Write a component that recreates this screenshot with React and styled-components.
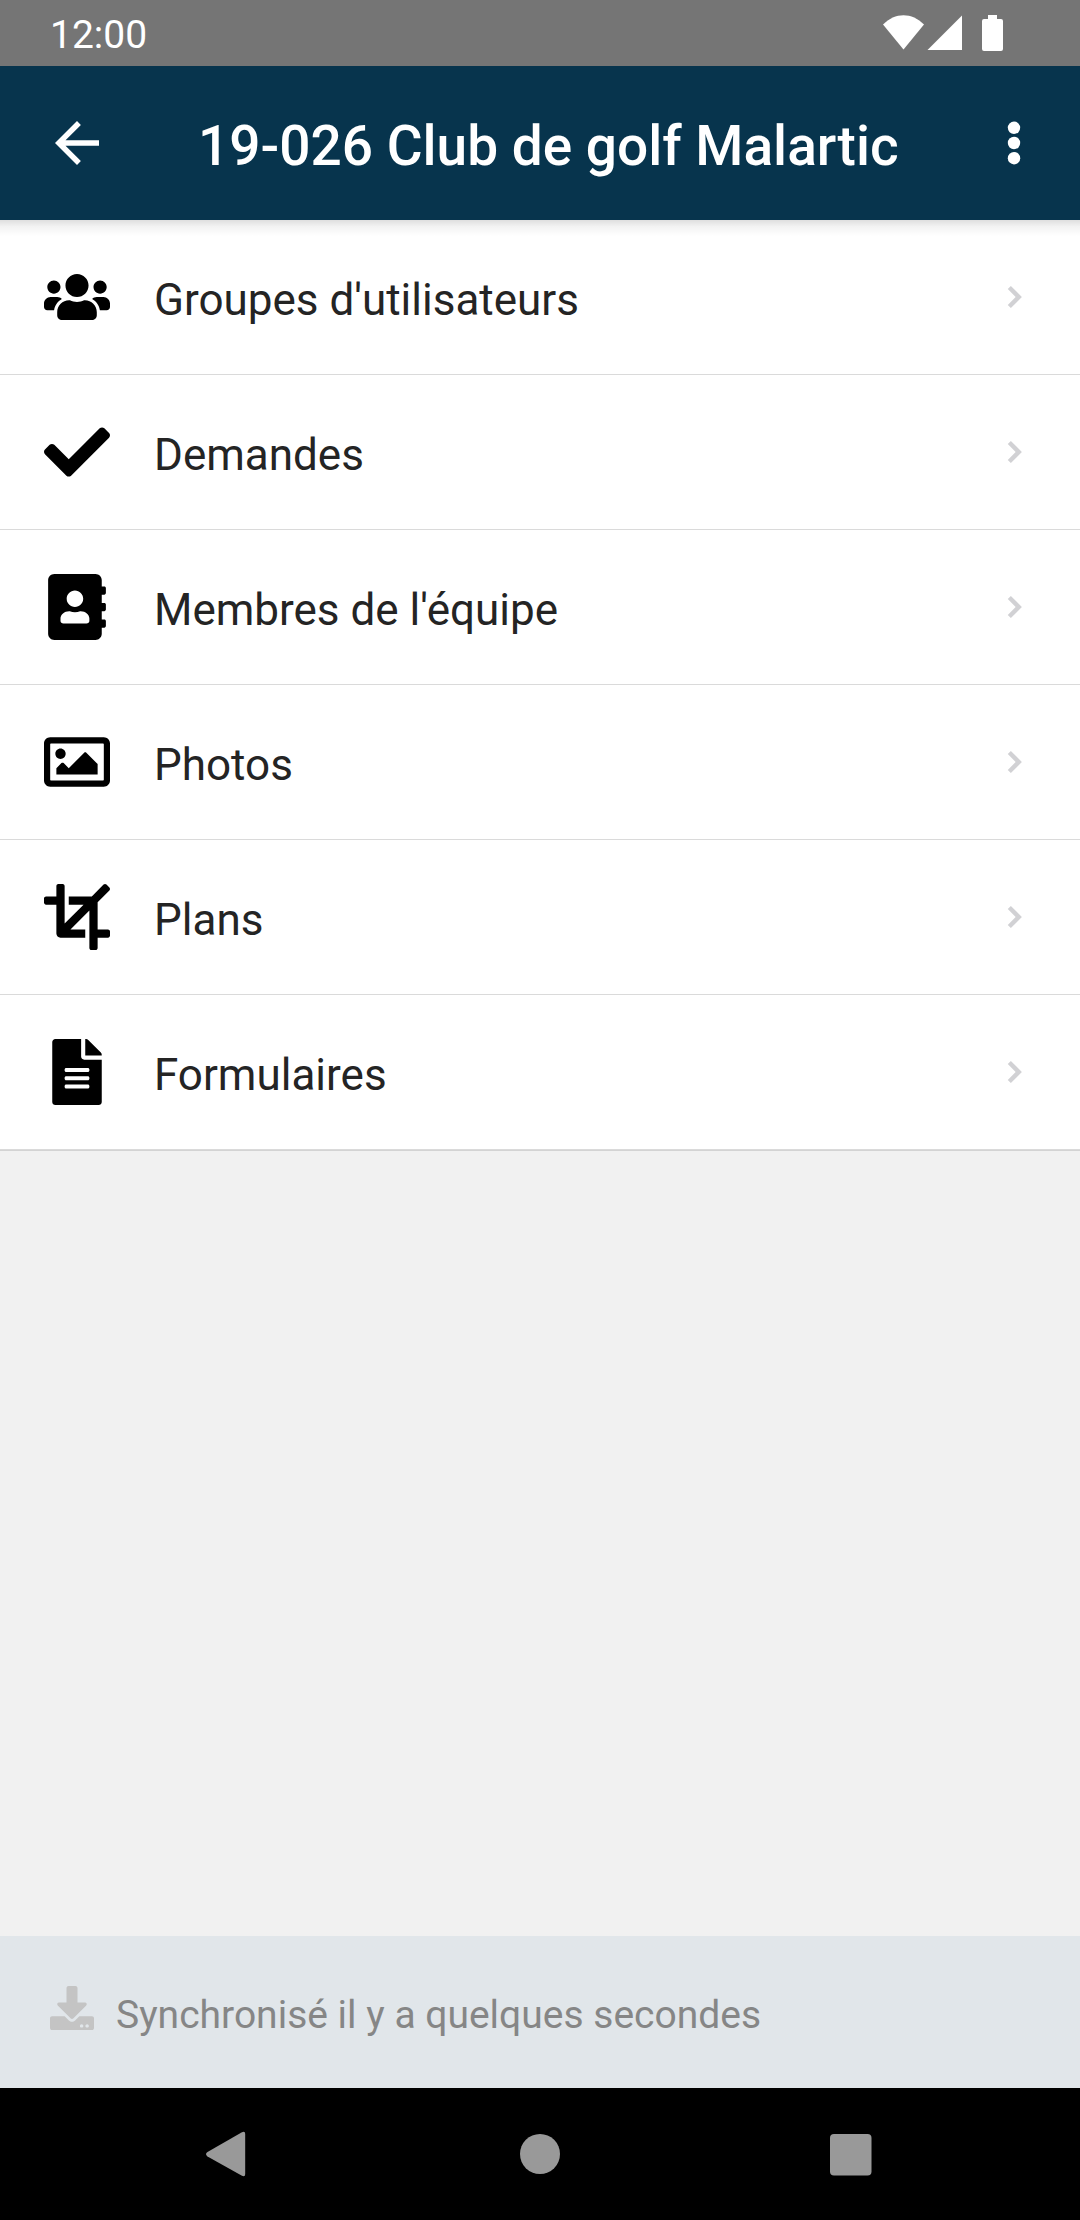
import styled, { createGlobalStyle } from 'styled-components'
import {
  FaUsers,
  FaCheck,
  FaAddressBook,
  FaRegImage,
  FaFileAlt,
  FaDownload
} from 'react-icons/fa'

const GlobalStyle = createGlobalStyle`
  * {
    box-sizing: border-box;
  }
  body {
    margin: 0;
    font-family: Roboto, sans-serif;
  }
`

const Screen = styled.div`
  display: flex;
  flex-direction: column;
  height: 2220px;
  width: 1080px;
  background-color: #f1f1f1;
  overflow: hidden;
`

const StatusBar = styled.div`
  display: flex;
  justify-content: space-between;
  align-items: center;
  height: 66px;
  padding: 0 77px 0 50px;
  background-color: #757575;
  color: #fff;
`

const Clock = styled.span`
  font-size: 39px;
  line-height: 46px;
  padding-top: 4px;
`

const StatusIcons = styled.svg`
  width: 120px;
  height: 66px;
  fill: #fff;
`

const Toolbar = styled.header`
  position: relative;
  display: flex;
  align-items: center;
  height: 154px;
  padding: 0 33px 0 44px;
  background-color: #07344d;
  color: #fff;

  /* soft shadow over the top of the list */
  &::after {
    content: '';
    position: absolute;
    left: 0;
    top: 100%;
    width: 100%;
    height: 16px;
    background: linear-gradient(
      rgba(0, 0, 0, 0.13),
      rgba(0, 0, 0, 0.05) 40%,
      rgba(0, 0, 0, 0)
    );
  }
`

const ToolbarButton = styled.button`
  display: flex;
  width: 66px;
  height: 66px;
  padding: 0;
  border: 0;
  background: none;

  svg {
    width: 66px;
    height: 66px;
    fill: #fff;
  }
`

const Title = styled.h1`
  flex: 1;
  margin: 0;
  padding: 5px 0 0 88px;
  font-size: 55px;
  font-weight: 500;
  line-height: 66px;
  white-space: nowrap;
`

const List = styled.ul`
  margin: 0;
  padding: 0;
  list-style: none;
  background-color: #fff;
  border-bottom: 1px solid #d3d3d3;
`

const Item = styled.li`
  display: flex;
  align-items: center;
  height: 155px;
  padding: 0 44px;
  border-bottom: 1px solid #dadada;
`

const ItemIcon = styled.span`
  display: flex;
  justify-content: center;
  width: 66px;
  margin-right: 44px;
  font-size: 66px;
  color: #000;
`

const ItemLabel = styled.span`
  flex: 1;
  padding-top: 6px;
  font-size: 44px;
  line-height: 52px;
  color: #242424;
`

const Chevron = styled.svg`
  width: 44px;
  height: 44px;
  fill: #d1d1d4;
`

const SyncBar = styled.footer`
  display: flex;
  align-items: center;
  height: 152px;
  margin-top: auto;
  padding: 0 50px;
  background-color: #e1e6ea;
`

const SyncIcon = styled.span`
  display: flex;
  margin: 0 22px 8px 0;
  font-size: 44px;
  color: #c4c4c4;
`

const SyncText = styled.span`
  padding-top: 6px;
  font-size: 39px;
  line-height: 46px;
  color: #868686;
`

const NavBar = styled.nav`
  display: flex;
  justify-content: center;
  height: 132px;
  background-color: #000;
`

const NavButton = styled.button`
  display: flex;
  justify-content: center;
  align-items: center;
  width: 312px;
  padding: 0;
  border: 0;
  background: none;

  svg {
    width: 66px;
    height: 66px;
    fill: #999;
  }
`

// thinner bars than the FaCrop of react-icons
function CropIcon() {
  return (
    <svg viewBox='0 0 512 512' width='1em' height='1em' fill='currentColor'>
      <path d='M496 352H416V141.25L507.3 49.95c6.25-6.25 6.25-16.38 0-22.63L484.69 4.69c-6.25-6.25-16.38-6.25-22.63 0L370.75 96H192v64h114.75L160 306.75V16c0-8.84-7.16-16-16-16h-32c-8.84 0-16 7.16-16 16v80H16C7.16 96 0 103.16 0 112v32c0 8.84 7.16 16 16 16h80v224c0 17.67 14.33 32 32 32h192v-64H205.25L352 205.25V496c0 8.84 7.16 16 16 16h32c8.84 0 16-7.16 16-16v-80h80c8.84 0 16-7.16 16-16v-32c0-8.84-7.16-16-16-16z' />
    </svg>
  )
}

const items = [
  { label: "Groupes d'utilisateurs", Icon: FaUsers },
  { label: 'Demandes', Icon: FaCheck },
  { label: "Membres de l'équipe", Icon: FaAddressBook },
  { label: 'Photos', Icon: FaRegImage },
  { label: 'Plans', Icon: CropIcon },
  { label: 'Formulaires', Icon: FaFileAlt }
]

function App() {
  return (
    <Screen>
      <GlobalStyle />
      <StatusBar>
        <Clock>12:00</Clock>
        {/* wifi, signal, battery */}
        <StatusIcons viewBox='0 0 120 66'>
          <path d='M0 24.5C12 12 29 12 41 24.5L20.5 49.5Z' />
          <path d='M44.5 50L79 15.5V50Z' />
          <path d='M105 15h9v4h4a2 2 0 0 1 2 2v28a2 2 0 0 1-2 2h-17a2 2 0 0 1-2-2V21a2 2 0 0 1 2-2h4z' />
        </StatusIcons>
      </StatusBar>
      <Toolbar>
        <ToolbarButton aria-label='Retour'>
          <svg viewBox='0 0 24 24'>
            <path d='M20 11H7.83l5.59-5.59L12 4l-8 8 8 8 1.41-1.41L7.83 13H20v-2z' />
          </svg>
        </ToolbarButton>
        <Title>19-026 Club de golf Malartic</Title>
        <ToolbarButton aria-label='Options'>
          <svg viewBox='0 0 66 66'>
            <circle cx='33' cy='17.8' r='6.2' />
            <circle cx='33' cy='33' r='6.2' />
            <circle cx='33' cy='48.2' r='6.2' />
          </svg>
        </ToolbarButton>
      </Toolbar>
      <List>
        {items.map(({ label, Icon }) => (
          <Item key={label}>
            <ItemIcon>
              <Icon />
            </ItemIcon>
            <ItemLabel>{label}</ItemLabel>
            <Chevron viewBox='0 0 24 24'>
              <path d='M10.3 6L8.6 7.7l4.3 4.3-4.3 4.3 1.7 1.7 6-6z' />
            </Chevron>
          </Item>
        ))}
      </List>
      <SyncBar>
        <SyncIcon>
          <FaDownload />
        </SyncIcon>
        <SyncText>Synchronisé il y a quelques secondes</SyncText>
      </SyncBar>
      <NavBar>
        <NavButton aria-label='Précédent'>
          <svg viewBox='0 0 66 66'>
            <path d='M12.5 31L46.5 11.4Q50.2 9.6 50.2 13V53Q50.2 56.5 46.5 54.6L12.5 35.5Q9.5 33.2 12.5 31Z' />
          </svg>
        </NavButton>
        <NavButton aria-label='Accueil'>
          <svg viewBox='0 0 66 66'>
            <circle cx='33' cy='33' r='20' />
          </svg>
        </NavButton>
        <NavButton aria-label='Récents'>
          <svg viewBox='0 0 66 66'>
            <rect x='11' y='13' width='41.5' height='41.5' rx='4' />
          </svg>
        </NavButton>
      </NavBar>
    </Screen>
  )
}

export default App
